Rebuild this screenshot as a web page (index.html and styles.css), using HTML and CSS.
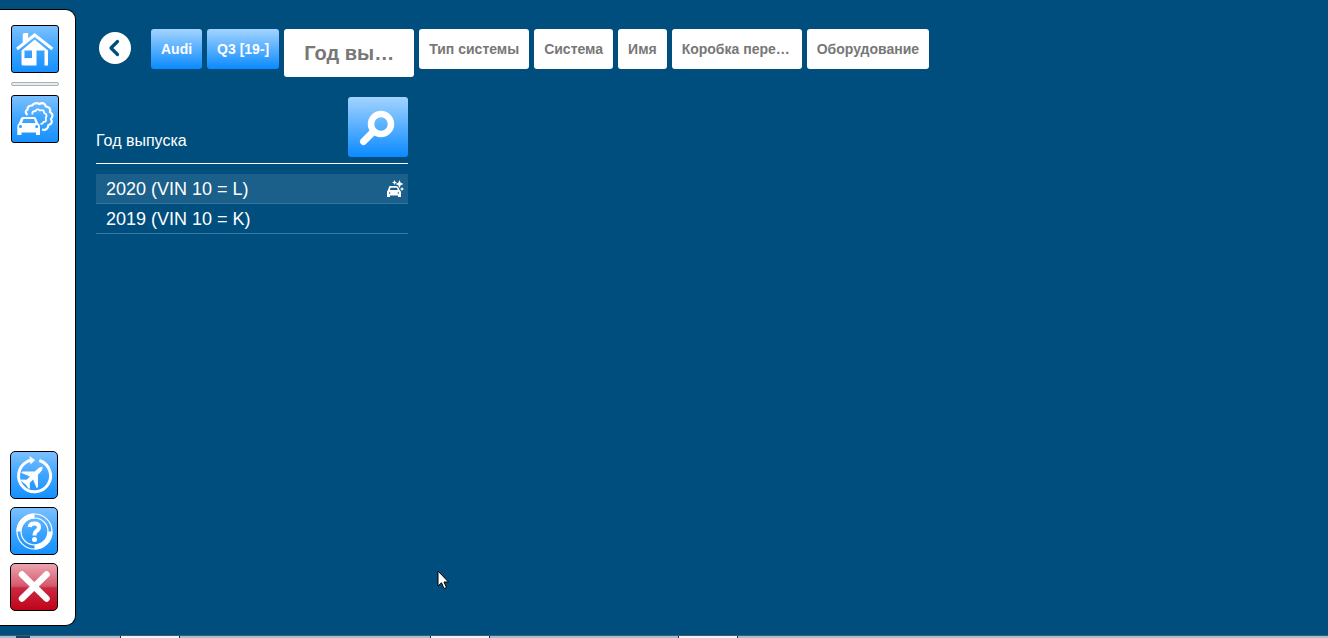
FILE: index.html
```html
<!DOCTYPE html>
<html lang="ru">
<head>
<meta charset="utf-8">
<meta name="viewport" content="width=device-width, initial-scale=1">
<title>Год выпуска</title>
<link rel="stylesheet" href="styles.css">
</head>
<body>
<div class="app">
  <nav class="sidebar" aria-label="Меню">
    <div class="group group-top">
      <button class="tool" type="button" aria-label="Домой">
        <svg viewBox="0 0 46 46" aria-hidden="true">
          <path d="M10.700 17V9 Q10.700 7 12.500 7 H16.200 V13z" fill="#fff"/>
          <path d="M5 23 L22.700 9 L40.400 23" fill="none" stroke="#fff" stroke-width="3"/>
          <path fill-rule="evenodd" fill="#fff" d="M22.700 13.500 L36 24.500 V39.500 H32.500 V24.500 H24.500 V39.500 H11 Q9.500 39.500 9.500 38 V24.500z M12.500 24.500V32H20V24.500z"/>
        </svg>
      </button>
      <hr class="divider">
      <button class="tool" type="button" aria-label="Выхлоп">
        <svg viewBox="0 0 46 46" aria-hidden="true" fill="none" stroke="#fff">
          <path stroke-width="2.200" d="M15.500 19 Q12 15.500 15.500 13.500 Q15.500 9.500 20 9.500 Q23 5.500 27.500 8 Q32 5.500 34 10.500 Q39 11 38 16 Q42.500 19 39 23 Q41.500 27.500 36.500 29 Q35.500 35 30 33.500"/>
          <path stroke-width="1.800" d="M20.500 18.500 Q19.500 15 23.500 15 Q25 12 28 14.500 Q32 13 32.200 17 Q36 18.500 33.700 22 Q35 26 31.500 26 Q30.500 28.500 28.500 27.500"/>
          <path fill="#fff" stroke="none" fill-rule="evenodd" d="M11 21 H22 Q24 21 24.500 23 L26 27 Q28 28 28 31 V39 H24 V36.500 H9.500 V39 H5.300 V31 Q5.300 28 7 27 L8.500 23 Q9 21 11 21z M11.500 23 L10 27 H23.500 L22 23z M7 30.500 a1.500 1.500 0 1 0 3 0 a1.500 1.500 0 1 0-3 0z M23.200 30.500 a1.500 1.500 0 1 0 3 0 a1.500 1.500 0 1 0-3 0z"/>
        </svg>
      </button>
    </div>
    <div class="group group-bottom">
      <button class="tool" type="button" aria-label="Сменить автомобиль">
        <svg viewBox="0 0 46 46" aria-hidden="true">
          <path d="M28.300 8.500 A16 16 0 1 1 16 9.700 L20 8" fill="none" stroke="#fff" stroke-width="3"/>
          <path d="M18.500 4 L24 8 L19.500 12.500z" fill="#fff"/>
          <g transform="translate(22.500 24) rotate(45)" fill="#fff">
            <path d="M0-13 Q2.200-11 2.200-7.500 V-4 L11 4.500 V6.500 L2.200 2.800 V7.500 L6 11 V12.500 L0 11.500 L-6 12.500 V11 L-2.200 7.500 V2.800 L-11 6.500 V4.500 L-2.200-4 V-7.500 Q-2.200-11 0-13z"/>
          </g>
        </svg>
      </button>
      <button class="tool" type="button" aria-label="Справка">
        <svg viewBox="0 0 46 46" aria-hidden="true" fill="none" stroke="#fff">
          <circle cx="23.500" cy="23.500" r="17.500" stroke-width="1.200"/>
          <circle cx="23.500" cy="23.500" r="13.500" stroke-width="1.200"/>
          <path stroke-width="5" d="M7.900 23.500 A15.600 15.600 0 0 1 23.500 7.900 M39.100 23.500 A15.600 15.600 0 0 1 23.500 39.100"/>
          <path stroke-width="4" d="M18.700 19 Q19 15.500 23.500 15.500 Q28 15.500 28 19 Q28 21.500 25.500 23 Q23.500 24.500 23.500 27.500"/>
          <circle cx="23.500" cy="31.500" r="2.500" fill="#fff" stroke="none"/>
        </svg>
      </button>
      <button class="tool tool-close" type="button" aria-label="Закрыть">
        <svg viewBox="0 0 46 46" aria-hidden="true"><path d="M11 10.500 L35.500 34.500 M35.500 10.500 L11 34.500" stroke="#fff" stroke-width="6.500" stroke-linecap="round"/></svg>
      </button>
    </div>
  </nav>

  <main class="content">
    <div class="steps">
      <button class="back" type="button" aria-label="Назад">
        <svg viewBox="0 0 32 32" aria-hidden="true"><path d="M18.500 9.500 L12 16 L18.500 22.500" fill="none" stroke="#004e7d" stroke-width="3.200" stroke-linecap="round" stroke-linejoin="round"/></svg>
      </button>
      <button class="step step-done" type="button">Audi</button>
      <button class="step step-done" type="button">Q3 [19-]</button>
      <button class="step step-current" type="button">Год выпуска</button>
      <button class="step" type="button">Тип системы</button>
      <button class="step" type="button">Система</button>
      <button class="step" type="button">Имя</button>
      <button class="step" type="button">Коробка передач</button>
      <button class="step" type="button">Оборудование</button>
    </div>

    <section class="panel">
      <header class="panel-head">
        <h1 class="panel-title">Год выпуска</h1>
        <button class="search" type="button" aria-label="Поиск">
          <svg viewBox="0 0 60 60" aria-hidden="true" fill="none" stroke="#fff"><circle cx="33" cy="27" r="10" stroke-width="6.500"/><path d="M25 35 L15.500 44.500" stroke-width="7" stroke-linecap="round"/></svg>
        </button>
      </header>
      <ul class="years">
        <li><button class="year year-active" type="button">2020 (VIN 10 = L)
          <svg class="new-car" viewBox="0 0 18 18" aria-hidden="true" fill="#fff"><path fill-rule="evenodd" d="M4 6 H10 Q12 6 12.500 7.500 L13.500 10 Q15 10.500 15 12.500 V17 H12 V15.500 H4 V17 H1 V12.500 Q1 10.500 2 10 L3 7 Q3.300 6 4 6z M4.600 7.800 L3.900 10 H11.700 L11 7.800z M2.800 13a.8.8 0 1 0 1.600 0a.8.8 0 1 0-1.600 0z M11.600 13a.8.8 0 1 0 1.600 0a.8.8 0 1 0-1.600 0z"/><path d="M13.500 0 L14.700 2.800 L17.500 4 L14.700 5.200 L13.500 8 L12.300 5.200 L9.500 4 L12.300 2.800z M8.500 0 L9.300 1.700 L11 2.500 L9.300 3.300 L8.500 5 L7.700 3.300 L6 2.500 L7.700 1.700z M16 7 L16.700 8.300 L18 9 L16.700 9.700 L16 11 L15.300 9.700 L14 9 L15.300 8.300z"/></svg>
        </button></li>
        <li><button class="year" type="button">2019 (VIN 10 = K)</button></li>
      </ul>
    </section>
  </main>

  <footer class="taskbar" aria-hidden="true">
    <span class="start"></span>
    <span class="task task-first"></span>
    <span class="task task-second"></span>
    <span class="task task-third"></span>
  </footer>
</div>
<svg class="cursor" viewBox="0 0 12 20" aria-hidden="true"><path d="M1 1 V16 L4.500 12.800 L7 18.500 L9.500 17.500 L7 12 H11.500z" fill="#fff" stroke="#000"/></svg>
</body>
</html>
```
FILE: styles.css
```css
* {
  box-sizing: border-box;
}

body {
  margin: 0;
  background: #004e7d;
  color: #fff;
  font-family: "Liberation Sans", Arial, sans-serif;
}

button {
  margin: 0;
  padding: 0;
  border: 0;
  font: inherit;
  color: inherit;
  cursor: pointer;
}

svg {
  display: block;
}

.app {
  display: grid;
  grid-template-columns: 76px 1fr;
  grid-template-rows: 1fr 3px;
  row-gap: 9px;
  min-height: 100vh;
}

.sidebar {
  display: flex;
  flex-direction: column;
  justify-content: space-between;
  margin-top: 9px;
  padding: 15px 0 14px;
  background: #fff;
  border: 1px solid #000;
  border-left: 0;
  border-radius: 0 10px 10px 0;
}

.group {
  display: flex;
  flex-direction: column;
  gap: 8px;
}

.group-top {
  padding-left: 11px;
}

.group-bottom {
  padding-left: 10px;
}

.tool {
  width: 48px;
  height: 48px;
  border: 1px solid #000;
  border-radius: 3px;
  background: linear-gradient(#7cc0ff, #3fa5ff 50%, #1590ff);
}

.group-bottom .tool {
  border-radius: 5px;
}

.group-bottom .tool-close {
  background: linear-gradient(#eba5b0, #d5586c 48%, #c92a42 52%, #c00418);
}

.divider {
  width: 48px;
  height: 4px;
  margin: 1px 0;
  border: 1px solid #a9b2b5;
  border-radius: 2px;
  background: #e8ecee;
}

.content {
  padding: 29px 20px 0;
}

.steps {
  display: flex;
  align-items: flex-start;
  gap: 5px;
}

.back {
  flex: none;
  width: 32px;
  height: 32px;
  margin: 3px 15px 0 3px;
  border-radius: 50%;
  background: #fff;
}

.step {
  max-width: 130px;
  height: 40px;
  padding: 0 10px;
  overflow: hidden;
  border-radius: 3px;
  background: #fff;
  color: #777;
  font-size: 14px;
  font-weight: bold;
  text-overflow: ellipsis;
  white-space: nowrap;
}

.step-done {
  background: linear-gradient(#a3d3ff, #0a8aff);
  color: #fff;
}

.step-current {
  height: 48px;
  padding: 0 20px;
  font-size: 20px;
}

.panel {
  width: 312px;
  max-width: 100%;
  margin-top: 20px;
}

.panel-head {
  display: flex;
  align-items: flex-end;
  justify-content: space-between;
  padding-bottom: 6px;
  border-bottom: 1px solid #fff;
}

.panel-title {
  margin: 0;
  padding-bottom: 6px;
  font-size: 16px;
  line-height: 20px;
  font-weight: normal;
}

.search {
  width: 60px;
  height: 60px;
  border-radius: 3px;
  background: linear-gradient(#a3d3ff, #0a8aff);
}

.years {
  margin: 10px 0 0;
  padding: 0;
  list-style: none;
}

.year {
  display: flex;
  align-items: center;
  justify-content: space-between;
  width: 100%;
  height: 30px;
  padding: 1px 4px 0 10px;
  border-bottom: 1px solid #3577a3;
  background: none;
  font-size: 18px;
  text-align: left;
}

.year-active {
  background: #1a608b;
}

.new-car {
  width: 18px;
  height: 18px;
}

.taskbar {
  grid-column: 1 / -1;
  display: flex;
  border-top: 1px solid #42596c;
  background: #a9bdd2;
}

.start {
  width: 14px;
  margin-left: 16px;
  background: #17466d;
}

.task {
  width: 60px;
  border: 1px solid #222c38;
  border-width: 0 1px;
  background: #eef1f6;
}

.task-first {
  margin-left: 90px;
}

.task-second {
  margin-left: 250px;
}

.task-third {
  margin-left: 188px;
}

.cursor {
  position: absolute;
  top: 570px;
  left: 437px;
  width: 12px;
  height: 20px;
}
```
